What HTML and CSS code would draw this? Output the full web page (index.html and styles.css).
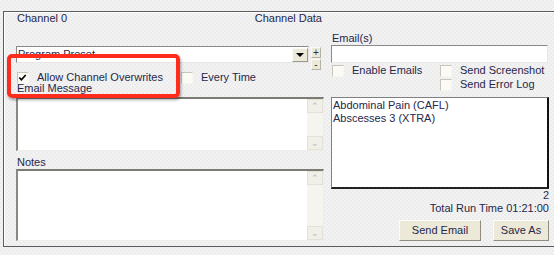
FILE: index.html
```html
<!DOCTYPE html>
<html>
<head>
<meta charset="utf-8">
<link rel="stylesheet" href="styles.css">
</head>
<body>
<div class="frame">
  <div class="col-left">
    <div class="header"><span>Channel 0</span><span>Channel Data</span></div>
    <div class="combo-row">
      <div class="combo">
        <span class="combo-text">Program Preset</span>
        <span class="drop-btn"><span class="tri"></span></span>
      </div>
      <div class="pm">
        <span class="pm-btn">+</span>
        <span class="pm-btn">-</span>
      </div>
    </div>
    <div class="check-row">
      <span class="cb checked"><svg viewBox="0 0 12 12" width="12" height="12"><path d="M2.5 5.5 L4.8 8 L9.5 2.8" fill="none" stroke="#000" stroke-width="1.8"/></svg></span>
      <span class="cb-label">Allow Channel Overwrites</span>
      <span class="cb every"></span>
      <span class="cb-label">Every Time</span>
    </div>
    <div class="label email-msg">Email Message</div>
    <div class="textbox tb-email">
      <div class="tb-area"></div>
      <div class="vscroll"><span class="sb-btn">&#8963;</span><span class="sb-track"></span><span class="sb-btn">&#8964;</span></div>
    </div>
    <div class="label notes">Notes</div>
    <div class="textbox tb-notes">
      <div class="tb-area"></div>
      <div class="vscroll"><span class="sb-btn">&#8963;</span><span class="sb-track"></span><span class="sb-btn">&#8964;</span></div>
    </div>
  </div>
  <div class="col-right">
    <div class="label emails">Email(s)</div>
    <div class="input"></div>
    <div class="opts">
      <div class="opt"><span class="cb"></span><span class="cb-label">Enable Emails</span></div>
      <div class="opt-stack">
        <div class="opt"><span class="cb"></span><span class="cb-label">Send Screenshot</span></div>
        <div class="opt"><span class="cb"></span><span class="cb-label">Send Error Log</span></div>
      </div>
    </div>
    <div class="listbox">
      <div class="item">Abdominal Pain (CAFL)</div>
      <div class="item">Abscesses 3 (XTRA)</div>
    </div>
    <div class="count">2</div>
    <div class="runtime">Total Run Time 01:21:00</div>
    <div class="buttons">
      <span class="btn btn-send">Send Email</span>
      <span class="btn btn-save">Save As</span>
    </div>
  </div>
</div>
<div class="highlight"></div>
</body>
</html>
```

FILE: styles.css
```css
html, body {
  margin: 0;
  padding: 0;
}
body {
  width: 554px;
  height: 255px;
  overflow: hidden;
  position: relative;
  font-family: "Liberation Sans", Arial, sans-serif;
  font-size: 11px;
  line-height: 13px;
  color: #27274a;
  background-color: #f1f1f1;
  background-image: repeating-conic-gradient(#ececec 0 25%, #f3f3f3 0 50%);
  background-size: 4px 4px;
}
.frame {
  margin: 11px 0 0 3px;
  width: 538px;
  height: 234px;
  border: 1px solid #5c5c5c;
  border-right: none;
  box-shadow: inset 1px 1px 0 #ffffff;
  padding-left: 12px;
  display: flex;
  box-sizing: content-box;
  overflow: hidden;
}
.col-left {
  width: 311px;
  flex: none;
  display: flex;
  flex-direction: column;
}
.header {
  display: flex;
  justify-content: space-between;
  padding-left: 1px;
  padding-right: 5px;
}
.combo-row {
  display: flex;
  align-items: flex-start;
  margin-top: 21px;
}
.combo {
  width: 293px;
  height: 17px;
  box-sizing: border-box;
  background: #fff;
  border-top: 1px solid #8a8a8a;
  border-left: 1px solid #8a8a8a;
  border-right: 1px solid #e6e6e6;
  border-bottom: 1px solid #e6e6e6;
  display: flex;
  align-items: center;
  justify-content: space-between;
  padding-left: 1px;
}
.combo-text {
  line-height: 13px;
}
.drop-btn {
  width: 16px;
  height: 14px;
  margin-top: 1px;
  box-sizing: border-box;
  background: #ece9d8;
  border-top: 1px solid #fbfbf6;
  border-left: 1px solid #fbfbf6;
  border-right: 1px solid #9d9a8a;
  border-bottom: 1px solid #9d9a8a;
  display: flex;
  align-items: center;
  justify-content: center;
}
.tri {
  width: 0;
  height: 0;
  border-left: 4px solid transparent;
  border-right: 4px solid transparent;
  border-top: 4px solid #000;
}
.pm {
  margin-left: 2px;
  margin-top: 1px;
  display: flex;
  flex-direction: column;
  gap: 1px;
}
.pm-btn {
  width: 10px;
  height: 11px;
  box-sizing: border-box;
  background: #ece9d8;
  border-top: 1px solid #fbfbf6;
  border-left: 1px solid #fbfbf6;
  border-right: 1px solid #b5b2a2;
  border-bottom: 1px solid #b5b2a2;
  font-size: 10px;
  line-height: 9px;
  text-align: center;
  color: #333;
}
.check-row {
  display: flex;
  align-items: center;
  margin-top: 1px;
  padding-left: 1px;
  height: 13px;
}
.cb {
  width: 12px;
  height: 12px;
  box-sizing: border-box;
  background: #fbfaf4;
  border-top: 1px solid #c8c6bb;
  border-left: 1px solid #c8c6bb;
  border-right: 1px solid #f7f6f0;
  border-bottom: 1px solid #f7f6f0;
  flex: none;
  display: flex;
}
.cb svg {
  margin: -1px 0 0 -1px;
}
.cb-label {
  margin-left: 8px;
}
.every {
  margin-left: 18px;
}
.label {
  padding-left: 1px;
}
.email-msg {
  margin-top: -2px;
}
.textbox {
  width: 308px;
  display: flex;
  box-sizing: border-box;
  border-top: 2px solid #7b7b74;
  border-left: 2px solid #8a8a84;
  border-right: 1px solid #efefea;
  border-bottom: 1px solid #efefea;
  background: #fff;
}
.tb-email {
  margin-top: 2px;
  height: 54px;
}
.notes {
  margin-top: 5px;
}
.tb-notes {
  margin-top: 0;
  height: 72px;
}
.tb-area {
  flex: 1;
}
.vscroll {
  width: 16px;
  background: #f5f4ee;
  display: flex;
  flex-direction: column;
}
.sb-btn {
  height: 14px;
  box-sizing: border-box;
  border: 1px solid #e4e2d8;
  background: #f0efe8;
  color: #b8b8b8;
  font-size: 9px;
  line-height: 12px;
  text-align: center;
}
.sb-track {
  flex: 1;
}
.col-right {
  margin-left: 4px;
  width: 218px;
  flex: none;
  display: flex;
  flex-direction: column;
}
.emails {
  margin-top: 20px;
}
.input {
  width: 217px;
  height: 18px;
  box-sizing: border-box;
  background: #fff;
  border-top: 1px solid #8a8a8a;
  border-left: 1px solid #8a8a8a;
  border-right: 1px solid #e9e9e9;
  border-bottom: 1px solid #e9e9e9;
}
.opts {
  display: flex;
  padding-left: 1px;
  margin-top: 1px;
}
.opts > .opt {
  width: 108px;
  height: 13px;
}
.opt {
  display: flex;
  align-items: center;
}
.opt-stack {
  display: flex;
  flex-direction: column;
  gap: 1px;
}
.opt-stack .opt {
  height: 13px;
}
.listbox {
  margin-top: 6px;
  width: 218px;
  height: 92px;
  box-sizing: border-box;
  background: #fff;
  border-top: 1px solid #7f7f7f;
  border-left: 1px solid #7f7f7f;
  border-right: 2px solid #111;
  border-bottom: 2px solid #222;
  padding: 1px 0 0 1px;
}
.item {
  line-height: 13px;
}
.count {
  margin-top: 1px;
  text-align: right;
  line-height: 11px;
}
.runtime {
  text-align: right;
  line-height: 12px;
  margin-top: 1px;
}
.buttons {
  display: flex;
  justify-content: flex-end;
  gap: 12px;
  margin-top: 6px;
}
.btn {
  height: 21px;
  box-sizing: border-box;
  background: #ece9d8;
  border-top: 1px solid #fdfdf8;
  border-left: 1px solid #fdfdf8;
  border-right: 1px solid #8f8c7e;
  border-bottom: 1px solid #8f8c7e;
  display: flex;
  align-items: center;
  justify-content: center;
  color: #27274a;
}
.btn-send {
  width: 82px;
}
.btn-save {
  width: 56px;
}
.highlight {
  position: absolute;
  left: 7px;
  top: 54px;
  width: 173px;
  height: 44px;
  box-sizing: border-box;
  border: 4px solid #ff2b1c;
  border-radius: 5px;
  box-shadow: 1px 2px 3px rgba(0, 0, 0, 0.35);
}
```
